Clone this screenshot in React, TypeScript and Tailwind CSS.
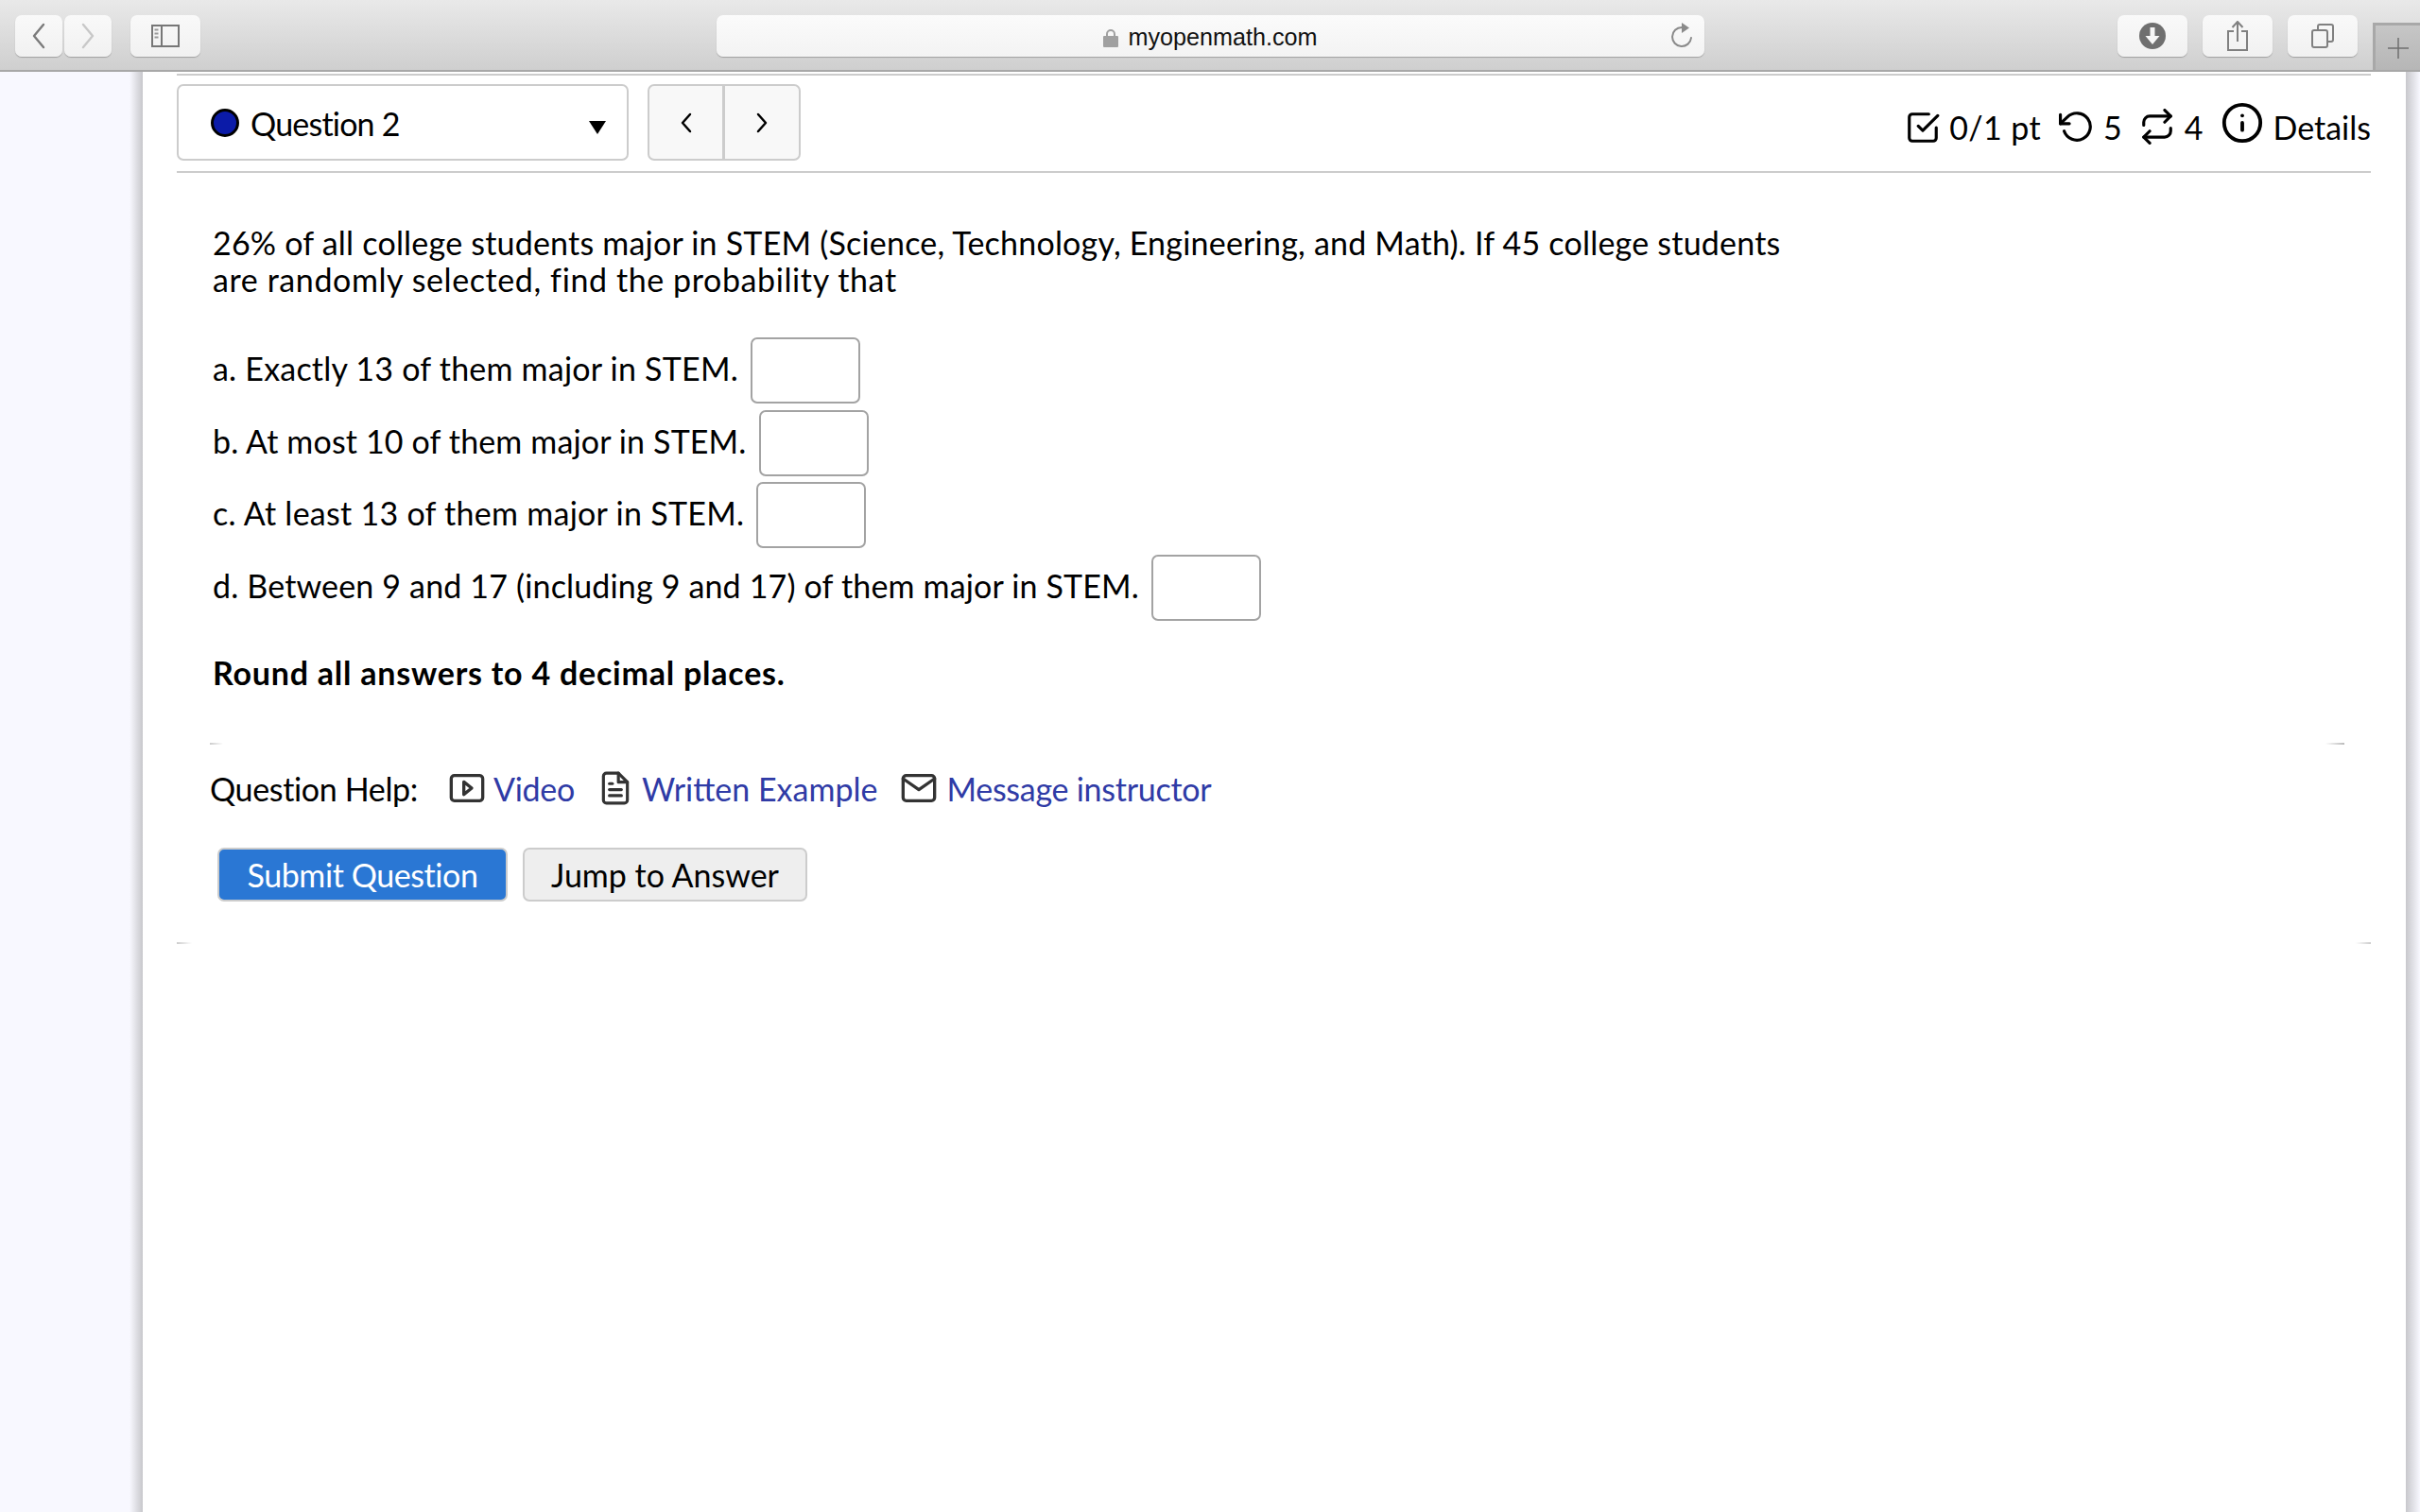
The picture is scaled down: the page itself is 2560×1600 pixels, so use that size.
const sans = { fontFamily: "'Lato', 'Noto Sans', sans-serif" };

function FeatherIcon({ size, className, children }: { size: number; className?: string; children: React.ReactNode }) {
  return (
    <svg
      width={size}
      height={size}
      viewBox="0 0 24 24"
      fill="none"
      stroke="currentColor"
      strokeWidth="2"
      strokeLinecap="round"
      strokeLinejoin="round"
      className={className}
    >
      {children}
    </svg>
  );
}

function ToolbarButton({ className, children }: { className: string; children?: React.ReactNode }) {
  return (
    <div className={`h-[44px] rounded-[7px] bg-gradient-to-b from-[#f9f9f9] to-[#f1f1f1] shadow-[0_1px_1px_rgba(0,0,0,0.25)] flex items-center justify-center ${className}`}>
      {children}
    </div>
  );
}

function Toolbar() {
  return (
    <div className="relative h-[76px] flex-none flex items-start pt-[16px] pl-[16px] bg-gradient-to-b from-[#e9e9e9] to-[#cfcfcf] border-b-2 border-[#a8a8a8]">
      <ToolbarButton className="w-[50px]">
        <svg width="16" height="28" viewBox="0 0 16 28" fill="none" stroke="#7b7b7b" strokeWidth="2.4" strokeLinecap="round" strokeLinejoin="round">
          <path d="M13 2 3 14l10 12" />
        </svg>
      </ToolbarButton>
      <ToolbarButton className="w-[50px] ml-[2px]">
        <svg width="16" height="28" viewBox="0 0 16 28" fill="none" stroke="#c8c8c8" strokeWidth="2.4" strokeLinecap="round" strokeLinejoin="round">
          <path d="M3 2l10 12L3 26" />
        </svg>
      </ToolbarButton>
      <ToolbarButton className="w-[74px] ml-[20px]">
        <svg width="30" height="24" viewBox="0 0 30 24" fill="none">
          <rect x="1" y="1" width="28" height="22" stroke="#777" strokeWidth="2" />
          <path d="M11 1v22" stroke="#777" strokeWidth="2" />
          <path d="M3.5 5.5h4M3.5 9.5h4M3.5 13.5h4" stroke="#999" strokeWidth="2" />
        </svg>
      </ToolbarButton>
      <div className="ml-[546px] w-[1045px] h-[44px] rounded-[7px] bg-gradient-to-b from-[#fbfbfb] to-[#f3f3f3] shadow-[0_1px_1px_rgba(0,0,0,0.25)] flex items-center relative">
        <div className="flex-1 flex items-center justify-center gap-[10px] pt-[3px] text-[25.200px] text-[#111111]" style={{ fontFamily: "'Liberation Sans', sans-serif" }}>
          <svg width="16" height="20" viewBox="0 0 16 20" fill="none">
            <path d="M4 9V6a4 4 0 0 1 8 0v3" stroke="#a0a0a0" strokeWidth="2" />
            <rect x="0" y="8" width="16" height="12" rx="1" fill="#a0a0a0" />
          </svg>
          <span>myopenmath.com</span>
        </div>
        <svg width="24" height="30" viewBox="0 0 24 30" fill="none" className="absolute right-[12px] top-[7px]">
          <path d="M12 6a10 10 0 1 0 10 11" stroke="#8a8a8a" strokeWidth="2" strokeLinecap="round" />
          <path d="M12 1l8 5.5-8 5.5z" fill="#8a8a8a" />
        </svg>
      </div>
      <ToolbarButton className="w-[74px] ml-[437px]">
        <svg width="30" height="30" viewBox="0 0 30 30">
          <circle cx="15" cy="15" r="14" fill="#6f6f6f" />
          <path d="M12.500 6h5v9h5L15 24 7.500 15h5z" fill="#f6f6f6" />
        </svg>
      </ToolbarButton>
      <ToolbarButton className="w-[74px] ml-[16px]">
        <svg width="24" height="32" viewBox="0 0 24 32" fill="none" stroke="#808080" strokeWidth="2">
          <path d="M8 11H2v20h20V11h-6M12 22V2M6.500 7 12 1l5.500 6" />
        </svg>
      </ToolbarButton>
      <ToolbarButton className="w-[74px] ml-[16px]">
        <svg width="24" height="26" viewBox="0 0 24 26" fill="none" stroke="#808080" strokeWidth="2">
          <rect x="1" y="7" width="16" height="18" rx="2" />
          <path d="M7 7V3a2 2 0 0 1 2-2h12a2 2 0 0 1 2 2v14a2 2 0 0 1-2 2h-4" />
        </svg>
      </ToolbarButton>
      <div className="absolute right-0 top-[24px] w-[50px] h-[50px] bg-gradient-to-b from-[#c6c6c6] to-[#b6b6b6] border-l-[3px] border-t-[3px] border-[#a8a8a8] flex items-center justify-center">
        <svg width="24" height="24" viewBox="0 0 24 24" stroke="#6f6f6f" strokeWidth="1.500">
          <path d="M12 1v22M1 12h22" />
        </svg>
      </div>
    </div>
  );
}

function AnswerRow({ label, tracking }: { label: string; tracking: string }) {
  return (
    <div className="flex items-center h-[70px]">
      <span className={`whitespace-nowrap pb-[5px] ${tracking}`}>{label}</span>
      <input type="text" className="w-[116px] h-[70px] ml-[13px] rounded-[7px] border-2 border-[#a3a3a3] bg-white" />
    </div>
  );
}

function HelpLink({ icon, label, className, labelClass }: { icon: React.ReactNode; label: string; className?: string; labelClass?: string }) {
  return (
    <span className={`flex items-center text-[#2f3ba6] ${className ?? ""}`}>
      {icon}
      <span className={labelClass}>{label}</span>
    </span>
  );
}

export default function App() {
  return (
    <div className="w-[2560px] h-[1600px] overflow-hidden flex flex-col bg-[#f8f8ff] text-black text-[34px] leading-[39px]" style={sans}>
      <Toolbar />
      <div className="flex flex-1 min-h-0">
        <div className="w-[151px] flex-none flex justify-end">
          <div className="w-[14px] bg-gradient-to-r from-[#f8f8ff] to-[#c8c8cc]" />
        </div>
        <main className="flex-1 bg-white pl-[36px] pr-[37px]">
          <div className="h-[2px] mt-[2px] bg-[#cccccc]" />
          <div className="flex items-start h-[103px] pt-[9px] border-b-2 border-[#cccccc]">
            <div className="w-[478px] h-[81px] rounded-[7px] border-2 border-[#cccccc] flex items-center pl-[34px] pr-[22px]">
              <span className="w-[30px] h-[30px] rounded-full bg-[#0b1ba8] border-[3px] border-black mr-[12px]" />
              <span className="flex-1 pt-[2px] tracking-[-0.8px]">Question 2</span>
              <svg width="18" height="14" viewBox="0 0 18 14" className="mt-[10px]">
                <path d="M0 0h18L9 14z" fill="#000" />
              </svg>
            </div>
            <div className="ml-[20px] w-[162px] h-[81px] rounded-[7px] border-2 border-[#cccccc] bg-[#f8f8f8] flex">
              <div className="w-[80px] border-r-[3px] border-[#cccccc] flex items-center justify-center">
                <svg width="14" height="22" viewBox="0 0 14 22" fill="none" stroke="#000" strokeWidth="2.500" strokeLinecap="round" strokeLinejoin="round"><path d="M11 2 3 11l8 9" /></svg>
              </div>
              <div className="flex-1 flex items-center justify-center">
                <svg width="14" height="22" viewBox="0 0 14 22" fill="none" stroke="#000" strokeWidth="2.500" strokeLinecap="round" strokeLinejoin="round"><path d="M3 2l8 9-8 9" /></svg>
              </div>
            </div>
            <div className="ml-auto flex items-center h-[60px] mt-[15px] whitespace-nowrap">
              <FeatherIcon size={38} className="mt-[2px] mr-[9px]">
                <polyline points="9 11 12 14 22 4" />
                <path d="M21 12v7a2 2 0 0 1-2 2H5a2 2 0 0 1-2-2V5a2 2 0 0 1 2-2h11" />
              </FeatherIcon>
              <span className="tracking-[0.4px]">0/1 pt</span>
              <FeatherIcon size={38} className="ml-[19px] mr-[9px]">
                <polyline points="1 4 1 10 7 10" />
                <path d="M3.510 15a9 9 0 1 0 2.130-9.360L1 10" />
              </FeatherIcon>
              <span>5</span>
              <FeatherIcon size={38} className="ml-[18px] mr-[10px]">
                <polyline points="17 1 21 5 17 9" />
                <path d="M3 11V9a4 4 0 0 1 4-4h14" />
                <polyline points="7 23 3 19 7 15" />
                <path d="M21 13v2a4 4 0 0 1-4 4H3" />
              </FeatherIcon>
              <span>4</span>
              <FeatherIcon size={46} className="ml-[18px] mr-[10px] -mt-[8px]">
                <circle cx="12" cy="12" r="10" />
                <line x1="12" y1="16" x2="12" y2="12" />
                <line x1="12" y1="8" x2="12" y2="8" />
              </FeatherIcon>
              <span>Details</span>
            </div>
          </div>
          <div className="pl-[38px] mt-[54px]">
            <p className="whitespace-nowrap">
              <span className="block tracking-[0.21px]">26% of all college students major in STEM (Science, Technology, Engineering, and Math). If 45 college students</span>
              <span className="block tracking-[0.6px]">are randomly selected, find the probability that</span>
            </p>
            <div className="mt-[42px] flex flex-col gap-[6.500px]">
              <AnswerRow tracking="tracking-[0.22px]" label="a. Exactly 13 of them major in STEM." />
              <AnswerRow tracking="tracking-[0.14px]" label="b. At most 10 of them major in STEM." />
              <AnswerRow tracking="tracking-[0.27px]" label="c. At least 13 of them major in STEM." />
              <AnswerRow tracking="tracking-[0.16px]" label="d. Between 9 and 17 (including 9 and 17) of them major in STEM." />
            </div>
            <p className="font-bold mt-[35px] tracking-[0.77px]">Round all answers to 4 decimal places.</p>
          </div>
          <div className="flex justify-between mt-[55px] pl-[35px] pr-[28px]">
            <span className="w-[14px] h-[2px] bg-gradient-to-r from-[#cccccc] to-white" />
            <span className="w-[20px] h-[2px] bg-gradient-to-r from-white to-[#bbbbbb]" />
          </div>
          <div className="flex items-center h-[39px] mt-[27px] pl-[35px] whitespace-nowrap">
            <span className="tracking-[-0.35px]">Question Help:</span>
            <HelpLink
              className="ml-[32px]"
              label="Video"
              labelClass="tracking-[-0.3px]"
              icon={
                <FeatherIcon size={40} className="text-[#333] mr-[8px]">
                  <rect x="2" y="4" width="20" height="16" rx="2" />
                  <polygon points="10 8 15 12 10 16" />
                </FeatherIcon>
              }
            />
            <HelpLink
              className="ml-[24px]"
              label="Written Example"
              icon={
                <FeatherIcon size={38} className="text-[#333] mr-[9px]">
                  <path d="M14 2H6a2 2 0 0 0-2 2v16a2 2 0 0 0 2 2h12a2 2 0 0 0 2-2V8z" />
                  <polyline points="14 2 14 8 20 8" />
                  <line x1="16" y1="13" x2="8" y2="13" />
                  <line x1="16" y1="17" x2="8" y2="17" />
                  <polyline points="10 9 9 9 8 9" />
                </FeatherIcon>
              }
            />
            <HelpLink
              className="ml-[24px]"
              label="Message instructor"
              labelClass="tracking-[-0.27px]"
              icon={
                <FeatherIcon size={40} className="text-[#333] mr-[9px]">
                  <path d="M4 4h16c1.100 0 2 .9 2 2v12c0 1.100-.9 2-2 2H4c-1.100 0-2-.9-2-2V6c0-1.100.9-2 2-2z" />
                  <polyline points="22,6 12,13 2,6" />
                </FeatherIcon>
              }
            />
          </div>
          <div className="flex gap-[16px] mt-[43px] pl-[43px]">
            <button className="w-[307px] h-[57px] rounded-[7px] border-2 border-[#cccccc] bg-[#2a77d4] text-white tracking-[-0.43px]">Submit Question</button>
            <button className="w-[301px] h-[57px] rounded-[7px] border-2 border-[#cccccc] bg-[#eeeeee]">Jump to Answer</button>
          </div>
          <div className="flex justify-between mt-[43px]">
            <span className="w-[16px] h-[2px] bg-gradient-to-r from-[#cccccc] to-white" />
            <span className="w-[16px] h-[2px] bg-gradient-to-r from-white to-[#cccccc]" />
          </div>
        </main>
        <div className="w-[15px] flex-none bg-gradient-to-r from-[#c8c8cc] to-[#f8f8ff]" />
      </div>
    </div>
  );
}
